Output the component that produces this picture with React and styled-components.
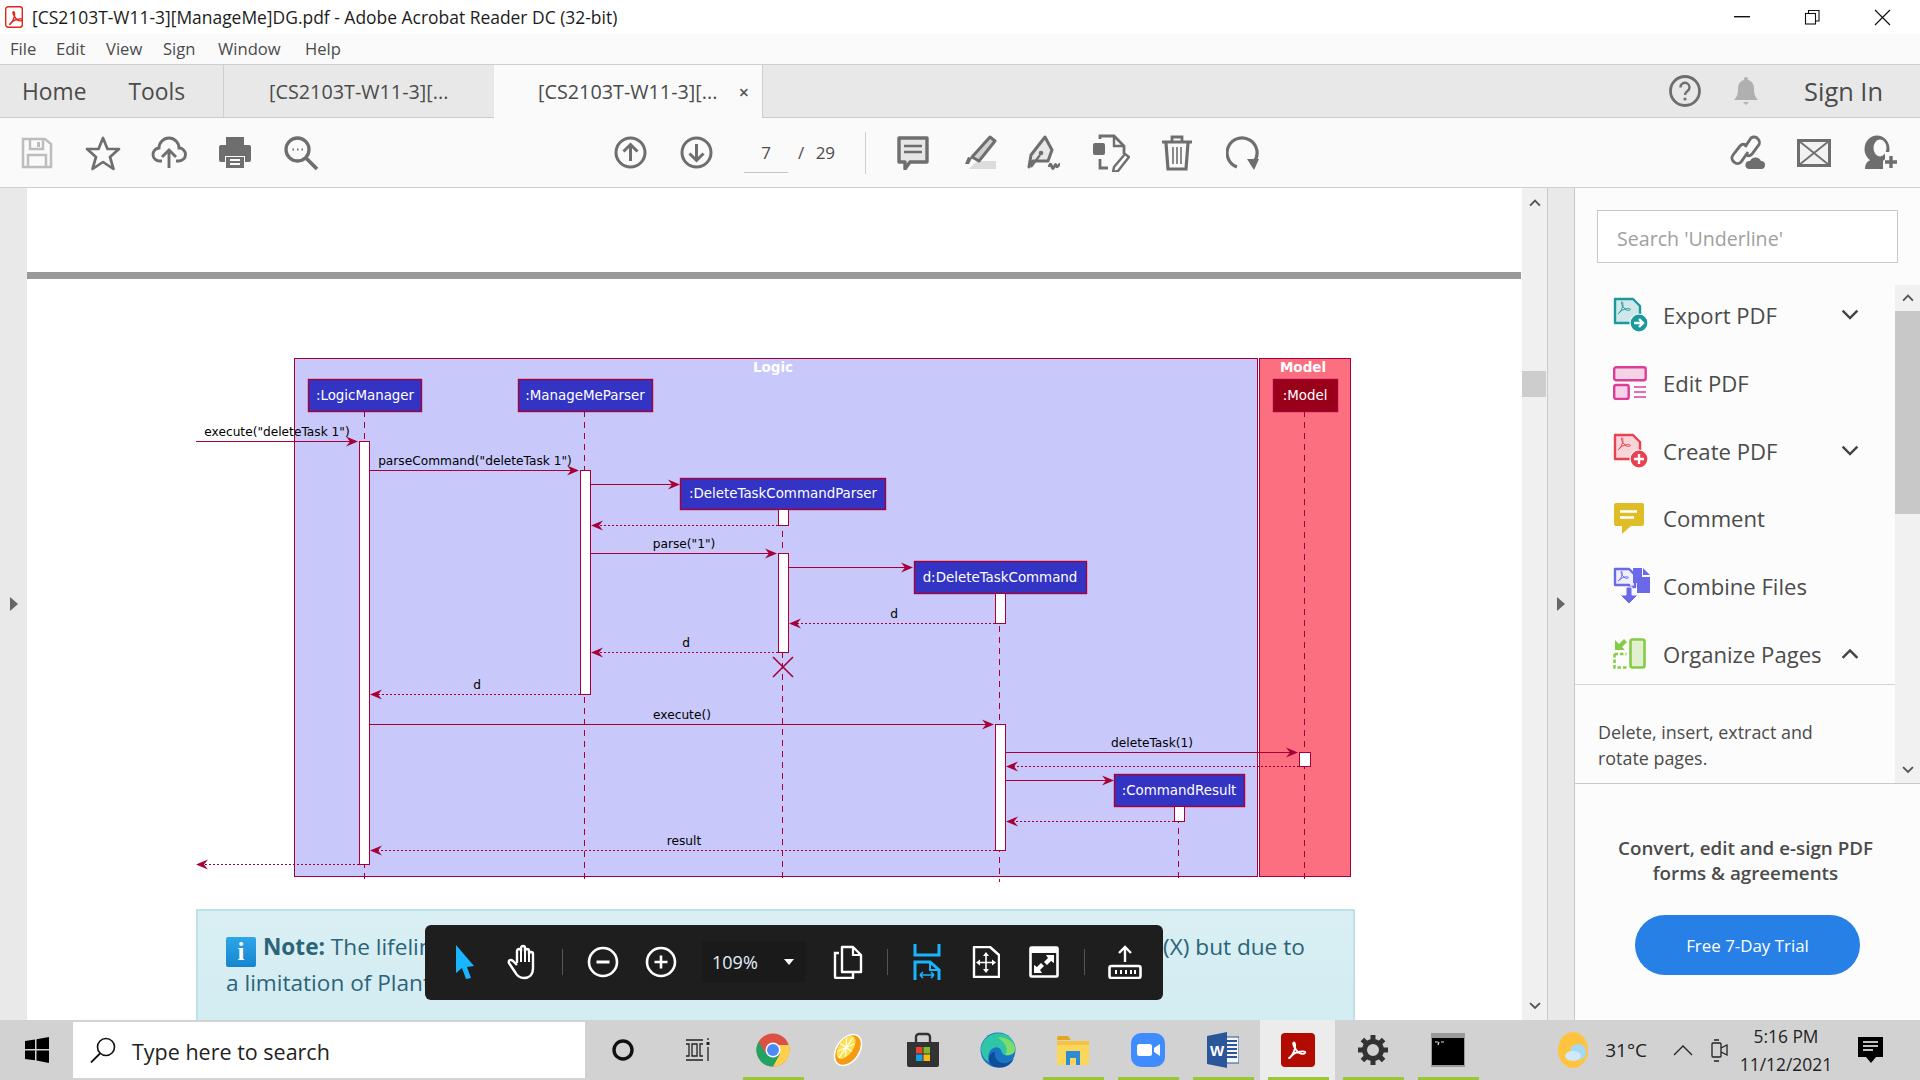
import React from "react";
import styled, { createGlobalStyle } from "styled-components";

const UI_FONT = `"Open Sans", "Noto Sans", sans-serif`;
const PLANT = "#a80036";

const Global = createGlobalStyle`
  html, body { margin: 0; padding: 0; background: #fff; }
  body { font-family: ${UI_FONT}; color: #444; overflow: hidden; }
  * { box-sizing: border-box; }
`;

const Window = styled.div`
  width: 1920px;
  height: 1080px;
  display: flex;
  flex-direction: column;
  overflow: hidden;
`;

// title bar
const TitleBar = styled.div`
  height: 34px;
  flex: none;
  background: #fff;
  display: flex;
  align-items: center;
  padding-left: 5px;
`;
const TitleText = styled.div`
  margin-left: 9px;
  font-size: 17.45px;
  color: #1c1c1c;
  white-space: nowrap;
`;
const WinControls = styled.div`
  margin-left: auto;
  margin-right: 3px;
  display: flex;
`;
const WinBtn = styled.div`
  width: 70px;
  height: 34px;
  display: flex;
  align-items: center;
  justify-content: center;
`;

// menu
const MenuBar = styled.div`
  height: 31px;
  flex: none;
  background: #fafafa;
  border-bottom: 1px solid #cfcfcf;
  display: flex;
  align-items: center;
  padding-left: 10px;
  padding-bottom: 1px;
`;
const MenuItem = styled.span`
  width: ${(p) => p.$w}px;
  font-size: 16.6px;
  color: #4b4b4b;
`;

// tabs
const TabBar = styled.div`
  height: 53px;
  flex: none;
  background: #e8e8e8;
  border-bottom: 1px solid #cacaca;
  display: flex;
  align-items: stretch;
`;
const NavGroup = styled.div`
  width: 224px;
  display: flex;
  align-items: center;
  padding-left: 22px;
  gap: 42px;
  border-right: 1px solid #cfcfcf;
`;
const NavLink = styled.span`
  font-size: 22.8px;
  color: #4b4b4b;
`;
const Tab = styled.div`
  width: ${(p) => (p.$active ? 269 : 270)}px;
  padding-left: ${(p) => (p.$active ? 44 : 45)}px;
  display: flex;
  align-items: center;
  font-size: 19.8px;
  color: #4b4b4b;
  background: ${(p) => (p.$active ? "#fafafa" : "transparent")};
  border-right: 1px solid ${(p) => (p.$active ? "#cfcfcf" : "transparent")};
  margin-bottom: ${(p) => (p.$active ? "-1px" : "0")};
  position: relative;
`;
const TabClose = styled.span`
  margin-left: auto;
  margin-right: 13px;
  font-size: 18px;
  font-weight: 600;
  color: #555;
`;
const TabRight = styled.div`
  margin-left: auto;
  display: flex;
  align-items: center;
  padding-right: 37px;
`;
const BellSlot = styled.div`
  margin-left: 32px;
  display: flex;
`;
const SignIn = styled.span`
  margin-left: 45px;
  font-size: 25.4px;
  font-weight: 500;
  color: #4b4b4b;
`;

// toolbar
const ToolBar = styled.div`
  height: 70px;
  flex: none;
  background: #fafafa;
  border-bottom: 1px solid #cfcfcf;
  display: flex;
  align-items: center;
  padding: 0 7px 0 4px;
`;
const Slot = styled.div`
  width: 66px;
  display: flex;
  align-items: center;
  justify-content: center;
`;
const ToolGroup = styled.div`
  display: flex;
  align-items: center;
  margin-left: ${(p) => (p.$push ? "auto" : `${p.$left || 0}px`)};
`;
const PageBox = styled.div`
  margin-left: 15px;
  width: 44px;
  height: 35px;
  border-bottom: 1px solid #c4c4c4;
  margin-top: 5px;
  text-align: center;
  font-size: 17px;
  line-height: 30px;
  color: #4b4b4b;
`;
const PageTotal = styled.span`
  margin-left: 10px;
  width: 55px;
  font-size: 17px;
  color: #4b4b4b;
  word-spacing: 7px;
`;
const ToolSep = styled.div`
  width: 1px;
  height: 42px;
  background: #cfcfcf;
  margin-left: 12px;
`;

// main area
const Main = styled.div`
  flex: 1;
  min-height: 0;
  display: flex;
`;
const Gutter = styled.div`
  width: ${(p) => p.$w}px;
  flex: none;
  background: #e9e9e9;
  display: flex;
  align-items: center;
  justify-content: center;
`;
const GutterArrow = styled.div`
  width: 0;
  height: 0;
  border-top: 7px solid transparent;
  border-bottom: 7px solid transparent;
  border-left: 8px solid #666;
`;
const DocPane = styled.div`
  width: 1495px;
  flex: none;
  background: #fff;
  position: relative;
  overflow: hidden;
  padding-top: 84px;
`;
const Rule = styled.div`
  height: 7px;
  margin-right: 1px;
  background: #999;
`;
const Diagram = styled.svg`
  display: block;
  margin: 71px 0 0 163px;
`;
const Note = styled.div`
  margin: 24px 0 0 169px;
  width: 1159px;
  height: 180px;
  padding: 18px 28px;
  background: linear-gradient(#d9eff4, #d0ebf0);
  border: 2px solid #bce2e8;
  font-size: 22.6px;
  color: #2b6478;
`;
const NoteIcon = styled.span`
  display: inline-flex;
  align-items: center;
  justify-content: center;
  width: 30px;
  height: 30px;
  margin-right: 7px;
  vertical-align: -5px;
  background: linear-gradient(#2fa5ea, #1486cf);
  border-radius: 2px;
  color: #fff;
  font: 700 25px "Liberation Serif", serif;
`;
const NoteLine = styled.div`
  height: 36px;
  line-height: 36px;
  white-space: nowrap;
`;
const Covered = styled.span`
  word-spacing: 2.5px;
`;
const FloatBar = styled.div`
  position: absolute;
  left: 398px;
  bottom: 20px;
  width: 738px;
  height: 75px;
  background: #1e1e1e;
  border-radius: 6px;
  display: flex;
  align-items: center;
  padding: 0 0 2px 11px;
`;
const FloatBtn = styled.div`
  width: ${(p) => p.$w || 58}px;
  flex: none;
  margin-left: ${(p) => p.$left || 0}px;
  display: flex;
  align-items: center;
  justify-content: center;
`;
const FloatSep = styled.div`
  width: 1px;
  height: 26px;
  background: #555;
  flex: none;
  margin: 0 ${(p) => p.$gap || 0}px;
`;
const ZoomBox = styled.div`
  width: 104px;
  height: 41px;
  flex: none;
  margin-left: 11px;
  background: #1a1a1a;
  display: flex;
  align-items: center;
  padding-left: 10px;
  color: #e4eef8;
  font-size: 18px;
`;
const ZoomCaret = styled.span`
  margin-left: 26px;
  width: 0;
  height: 0;
  border-left: 5px solid transparent;
  border-right: 5px solid transparent;
  border-top: 6px solid #fff;
`;

// page scrollbar
const PageScroll = styled.div`
  width: 26px;
  flex: none;
  background: #f0f0f0;
  border-right: 1px solid #c8c8c8;
  display: flex;
  flex-direction: column;
  align-items: center;
  padding: 11px 0 3px;
`;
const PageThumb = styled.div`
  align-self: flex-start;
  width: 24px;
  height: 26px;
  margin-top: 164px;
  background: #cdcdcd;
`;
const PageScrollEnd = styled.div`
  margin-top: auto;
  padding-bottom: 2px;
`;

// right panel
const Panel = styled.div`
  width: 346px;
  flex: none;
  background: #fcfcfc;
  border-left: 1px solid #c8c8c8;
  display: flex;
  flex-direction: column;
`;
const SearchBox = styled.div`
  margin: 22px 0 22px 22px;
  width: 301px;
  height: 53px;
  background: #fff;
  border: 1px solid #c8c8c8;
  padding: 3px 0 0 19px;
  display: flex;
  align-items: center;
  font-size: 19.6px;
  color: #a0a0a0;
`;
const ToolsArea = styled.div`
  height: 499px;
  flex: none;
  display: flex;
  border-bottom: 1px solid #c8c8c8;
`;
const ToolsList = styled.div`
  width: 320px;
  flex: none;
`;
const Rows = styled.div`
  display: flex;
  flex-direction: column;
  gap: 27.8px;
  padding: 10px 0 10px;
  border-bottom: 1px solid #d4d4d4;
`;
const Row = styled.div`
  height: 40px;
  display: flex;
  align-items: center;
  padding-left: 38px;
`;
const RowWrap = styled.div`
  position: relative;
  display: flex;
  align-items: center;
`;
const RowIcon = styled.div`
  width: 50px;
  flex: none;
  display: flex;
`;
const RowLabel = styled.span`
  font-size: 22.1px;
  color: #4b4b4b;
  white-space: nowrap;
`;
const RowChevron = styled.div`
  position: absolute;
  left: 228px;
  display: flex;
`;
const Description = styled.div`
  padding: 34px 0 0 23px;
  font-size: 17.9px;
  line-height: 26px;
  color: #4b4b4b;
`;
const ToolsScroll = styled.div`
  width: 25px;
  flex: none;
  background: #f1f1f1;
  display: flex;
  flex-direction: column;
  align-items: center;
`;
const ScrollBtn = styled.div`
  height: 26px;
  width: 100%;
  flex: none;
  display: flex;
  align-items: center;
  justify-content: center;
  margin-top: ${(p) => (p.$end ? "auto" : "0")};
`;
const ScrollThumb = styled.div`
  width: 100%;
  height: 203px;
  background: #c8c8c8;
`;
const Trial = styled.div`
  flex: 1;
  display: flex;
  flex-direction: column;
  align-items: center;
  padding-top: 52px;
`;
const TrialText = styled.div`
  font-size: 18.8px;
  font-weight: 600;
  line-height: 25px;
  text-align: center;
  color: #4b4b4b;
  margin-left: -4px;
`;
const TrialButton = styled.div`
  margin-top: 29px;
  width: 225px;
  height: 60px;
  border-radius: 30px;
  background: #2680e6;
  color: #fff;
  font-size: 16.9px;
  display: flex;
  align-items: center;
  justify-content: center;
`;

// taskbar
const Taskbar = styled.div`
  height: 60px;
  flex: none;
  background: #d2d2d2;
  display: flex;
  align-items: stretch;
`;
const StartBtn = styled.div`
  width: 73px;
  flex: none;
  display: flex;
  align-items: center;
  justify-content: center;
`;
const TaskSearch = styled.div`
  width: 512px;
  flex: none;
  margin: 2px 0;
  background: #fff;
  display: flex;
  align-items: center;
  padding-left: 17px;
  font-size: 21.5px;
  color: #222;
`;
const TaskSearchText = styled.span`
  margin: 2px 0 0 16px;
`;
const TaskCell = styled.div`
  width: 75px;
  flex: none;
  position: relative;
  display: flex;
  align-items: center;
  justify-content: center;
  background: ${(p) => (p.$active ? "#ececec" : "transparent")};
  ${(p) =>
    p.$on &&
    `&::after {
      content: "";
      position: absolute;
      left: 8px;
      right: 6px;
      bottom: 0;
      height: 3px;
      background: #9bc734;
    }`}
`;
const Tray = styled.div`
  margin-left: auto;
  display: flex;
  align-items: center;
  padding-right: 37px;
`;
const Temp = styled.span`
  margin-left: 17px;
  font-size: 19px;
  color: #222;
`;
const TrayIcon = styled.div`
  margin-left: ${(p) => p.$left}px;
  display: flex;
`;
const Clock = styled.div`
  margin-left: 9px;
  width: 96px;
  text-align: center;
  font-size: 17.4px;
  line-height: 28px;
  color: #222;
`;

// sequence diagram
const DiagramText = styled.text`
  font-family: "DejaVu Sans", sans-serif;
  font-size: ${(p) => p.$size || 12.2}px;
  font-weight: ${(p) => p.$weight || 400};
  fill: ${(p) => p.$fill || "#000"};
  text-anchor: middle;
  dominant-baseline: central;
`;

const participants = [
  { x: 308, y: 379, w: 113, h: 32, cx: 365, label: ":LogicManager" },
  { x: 518, y: 379, w: 134, h: 32, cx: 585, label: ":ManageMeParser" },
  { x: 680, y: 478, w: 205, h: 31, cx: 783, label: ":DeleteTaskCommandParser" },
  { x: 914, y: 561, w: 172, h: 32, cx: 1000, label: "d:DeleteTaskCommand" },
  { x: 1114, y: 774, w: 130, h: 32, cx: 1179, label: ":CommandResult" },
  { x: 1273, y: 379, w: 64, h: 32, cx: 1305, label: ":Model", fill: "#99001a" },
];
const lifelines = [
  [364, 411, 879],
  [584, 411, 879],
  [782, 509, 879],
  [999, 593, 882],
  [1178, 806, 879],
  [1304, 411, 879],
];
const activations = [
  [359, 441, 10, 423],
  [580, 470, 10, 224],
  [778, 509, 10, 16],
  [778, 553, 10, 99],
  [995, 593, 10, 30],
  [995, 724, 10, 126],
  [1299, 752, 11, 14],
  [1174, 806, 10, 15],
];
// from x, to x, y, dashed, label, label centre x
const messages = [
  [196, 358, 441, false, `execute("deleteTask 1")`, 277],
  [369, 579, 470, false, `parseCommand("deleteTask 1")`, 475],
  [590, 680, 484, false],
  [778, 591, 525, true],
  [590, 777, 553, false, `parse("1")`, 684],
  [788, 913, 567, false],
  [995, 789, 623, true, "d", 894],
  [778, 591, 652, true, "d", 686],
  [580, 370, 694, true, "d", 477],
  [369, 994, 724, false, "execute()", 682],
  [1005, 1298, 752, false, "deleteTask(1)", 1152],
  [1299, 1006, 766, true],
  [1005, 1114, 780, false],
  [1174, 1006, 821, true],
  [995, 370, 850, true, "result", 684],
  [359, 196, 864, true],
];

const SequenceDiagram = () => (
  <Diagram width="1170" height="535" viewBox="190 350 1170 535">
    <rect x="294.5" y="358.5" width="963" height="518" fill="#c8c8fa" stroke={PLANT} />
    <rect x="1259.5" y="358.5" width="91" height="518" fill="#fc6f81" stroke={PLANT} />
    <DiagramText x="773" y="367" $size="13.5" $weight="700" $fill="#fff">Logic</DiagramText>
    <DiagramText x="1303" y="367" $size="13.5" $weight="700" $fill="#fff">Model</DiagramText>
    {lifelines.map(([x, a, b]) => (
      <line key={x} x1={x + 0.5} x2={x + 0.5} y1={a} y2={b} stroke={PLANT} strokeDasharray="6 5" />
    ))}
    {participants.map((p) => (
      <g key={p.label}>
        <rect x={p.x + 0.5} y={p.y + 0.5} width={p.w} height={p.h} fill={p.fill || "#3333c4"} stroke={PLANT} strokeWidth="1.4" />
        <DiagramText x={p.cx} y={p.y + p.h / 2} $size="13.4" $fill="#fff">{p.label}</DiagramText>
      </g>
    ))}
    {activations.map(([x, y, w, h]) => (
      <rect key={`${x}-${y}`} x={x + 0.5} y={y + 0.5} width={w} height={h} fill="#fff" stroke={PLANT} />
    ))}
    {messages.map(([from, to, y, dashed, label, cx]) => {
      const d = to > from ? 1 : -1;
      return (
        <g key={`${from}-${y}`}>
          <line x1={from} x2={to - d * 3} y1={y + 0.5} y2={y + 0.5} stroke={PLANT} strokeWidth="1.1" strokeDasharray={dashed ? "2 2" : undefined} />
          <path d={`M${to} ${y + 0.5}L${to - d * 12} ${y - 4.5}L${to - d * 8} ${y + 0.5}L${to - d * 12} ${y + 5.5}Z`} fill={PLANT} />
          {label && <DiagramText x={cx} y={y - 9}>{label}</DiagramText>}
        </g>
      );
    })}
    <path d="M773 657L793 677M793 657L773 677" stroke={PLANT} strokeWidth="1.6" />
  </Diagram>
);

// icons
const Ico = ({ w = 32, h, vb = "0 0 32 32", children, ...rest }) => (
  <svg width={w} height={h || w} viewBox={vb} fill="none" {...rest}>
    {children}
  </svg>
);
const G = "#6e6e6e";

const AcrobatSwirl = ({ color, width = 1.6 }) => (
  <path
    d="M7 24c3-2 5-6 6-10 .5-3 0-6-1.300-5.500C10 9.500 13 15 16 18c2 2 6 2.500 7 1s-1-2-4-1.500c-4 .5-8 2-10 5-1 1.500-2 2-2 1.500z"
    stroke={color}
    strokeWidth={width}
    fill="none"
  />
);

const icons = {
  save: (
    <Ico>
      <path d="M2 2h22l6 5v23H2z" stroke="#bdbdbd" strokeWidth="2.500" />
      <path d="M9 3v9h13V3M7 29V18h18v11" stroke="#bdbdbd" strokeWidth="2.500" />
      <rect x="16" y="5" width="3" height="5" fill="#bdbdbd" />
    </Ico>
  ),
  star: (
    <Ico w={36} vb="0 0 36 36">
      <path d="M18 3l4.500 11h11.500l-9 8 3.500 12-10.500-7-10.500 7 3.500-12-9-8h11.500z" stroke={G} strokeWidth="2.700" strokeLinejoin="round" />
    </Ico>
  ),
  cloud: (
    <Ico w={36} vb="0 0 36 36">
      <path d="M11 26H9a6.500 6.500 0 0 1-1-13 10 10 0 0 1 20 0 6.500 6.500 0 0 1 0 13h-3" stroke={G} strokeWidth="2.900" />
      <path d="M18 33V15M11 22l7-7 7 7" stroke={G} strokeWidth="2.900" />
    </Ico>
  ),
  print: (
    <Ico w={36} vb="0 0 36 36">
      <path d="M9 2h18v9H9z" fill={G} />
      <path d="M4 10h28a2 2 0 0 1 2 2v13a2 2 0 0 1-2 2h-4v-6H8v6H4a2 2 0 0 1-2-2V12a2 2 0 0 1 2-2z" fill={G} />
      <path d="M9 22h18v11H9z" fill={G} />
      <path d="M13 25h10M13 29h10" stroke="#fafafa" strokeWidth="1.800" />
    </Ico>
  ),
  search: (
    <Ico w={36} vb="0 0 36 36">
      <circle cx="14.500" cy="14.500" r="11.500" stroke={G} strokeWidth="3.300" />
      <path d="M23 23l11 11" stroke={G} strokeWidth="3.800" />
      <path d="M9.500 14.500h1.500M14 14.500h1.500M18.500 14.500h1.500" stroke={G} strokeWidth="2" />
    </Ico>
  ),
  up: (
    <Ico w={33} vb="0 0 33 33">
      <circle cx="16.500" cy="16.500" r="14.500" stroke={G} strokeWidth="3" />
      <path d="M16.500 25V9M9.500 15.500l7-7 7 7" stroke={G} strokeWidth="3" />
    </Ico>
  ),
  down: (
    <Ico w={33} vb="0 0 33 33">
      <circle cx="16.500" cy="16.500" r="14.500" stroke={G} strokeWidth="3" />
      <path d="M16.500 8v16M9.500 17.500l7 7 7-7" stroke={G} strokeWidth="3" />
    </Ico>
  ),
  comment: (
    <Ico w={32} h={34} vb="0 0 32 34">
      <path d="M2 2h28v24H13l-5 7v-7H2z" fill="#e6e6e6" stroke={G} strokeWidth="3.400" strokeLinejoin="round" />
      <path d="M7 10h18M7 16h18" stroke={G} strokeWidth="2.400" />
    </Ico>
  ),
  highlight: (
    <Ico w={36} vb="0 0 36 36">
      <path d="M8 34h27v-8H16z" fill="#dcdcdc" />
      <path d="M29 2l5 4-16 20-7-4z" fill="#d0d0d0" stroke={G} strokeWidth="3" strokeLinejoin="round" />
      <path d="M11 23l-3 6h-4l3-7" fill={G} />
    </Ico>
  ),
  sign: (
    <Ico w={36} vb="0 0 36 36">
      <path d="M18 2l7 13-4 11H6l-4 6 2-12z" fill="#e8e8e8" stroke={G} strokeWidth="3" strokeLinejoin="round" />
      <path d="M4 32l9-12" stroke={G} strokeWidth="2.200" />
      <circle cx="14" cy="18" r="2.300" fill={G} />
      <path d="M22 32c1-4 2-4 3 0s2 0 3-2 1 2 2 2 2-3 3-3" stroke={G} strokeWidth="2.600" />
    </Ico>
  ),
  edit: (
    <Ico w={38} vb="0 0 38 38">
      <rect x="1" y="9" width="12" height="12" rx="2" fill={G} />
      <path d="M8 5V2h14l10 10v8" stroke={G} strokeWidth="2.800" />
      <path d="M22 2v10h10" stroke={G} strokeWidth="2.400" />
      <path d="M8 25v9h8" stroke={G} strokeWidth="2.800" />
      <path d="M33 20l4 3-11 14-5 1 1-5z" stroke={G} strokeWidth="2.400" strokeLinejoin="round" />
    </Ico>
  ),
  trash: (
    <Ico w={32} h={36} vb="0 0 32 36">
      <path d="M1 7h30" stroke={G} strokeWidth="3" />
      <path d="M11 6V2h10v4" stroke={G} strokeWidth="2.800" />
      <path d="M5 8l2 26h18l2-26" stroke={G} strokeWidth="3.200" />
      <path d="M12 12v17M16 12v17M20 12v17" stroke={G} strokeWidth="1.600" />
    </Ico>
  ),
  rotate: (
    <Ico w={34} vb="0 0 34 34">
      <path d="M11 31A15 15 0 1 1 28 26" stroke={G} strokeWidth="3.200" />
      <path d="M21 23h12l-5 11z" fill={G} />
    </Ico>
  ),
  link: (
    <Ico w={38} vb="0 0 38 38">
      <path d="M16 13l6-9a5 5 0 0 1 7 1 5 5 0 0 1 0 7l-6 8a5 5 0 0 1-6 1" stroke={G} strokeWidth="2.900" />
      <path d="M19 18l-7 10a5 5 0 0 1-7 0 5 5 0 0 1-1-7l7-9a5 5 0 0 1 6-1" stroke={G} strokeWidth="2.900" />
      <path d="M20 35a4 4 0 0 1 1-8 6 6 0 0 1 11 0 4 4 0 0 1 4 4 4 4 0 0 1-3 4z" fill={G} />
    </Ico>
  ),
  mail: (
    <Ico w={34} h={28} vb="0 0 34 28">
      <rect x="1.500" y="1.500" width="31" height="25" fill="#f2f2f2" stroke={G} strokeWidth="3" />
      <path d="M2 2l30 24M32 2L2 26" stroke={G} strokeWidth="1.800" />
    </Ico>
  ),
  user: (
    <Ico w={36} vb="0 0 36 36">
      <ellipse cx="15" cy="14" rx="12.500" ry="13.500" fill={G} />
      <ellipse cx="18" cy="13" rx="6.500" ry="8.500" fill="#fafafa" />
      <path d="M3 34c0-6 3-9 9-10l9 1v9z" fill={G} />
      <path d="M23 17h13v17H23z" fill="#fafafa" />
      <path d="M29 21v12M23 27h12" stroke={G} strokeWidth="3.400" />
    </Ico>
  ),
  help: (
    <Ico w={32} vb="0 0 32 32">
      <circle cx="16" cy="16" r="14.500" stroke={G} strokeWidth="2.800" />
      <path d="M11.500 12.500a4.500 4.500 0 1 1 7 3.500c-1.500 1-2.500 2-2.500 4" stroke={G} strokeWidth="2.400" />
      <circle cx="16" cy="24" r="1.600" fill={G} />
    </Ico>
  ),
  bell: (
    <Ico w={26} h={30} vb="0 0 26 30">
      <path d="M13 1c1.500 0 2 1 2 3 4 1 6 4 6 9 0 5 1 8 4 11H1c3-3 4-6 4-11 0-5 2-8 6-9 0-2 .5-3 2-3z" fill="#b0b0b0" />
      <path d="M10 26h6l-3 3z" fill="#b0b0b0" />
    </Ico>
  ),
};

const panelIcons = {
  export: (
    <Ico w={36} vb="0 0 36 36">
      <path d="M2 2h18l7 7v17H2z" fill="#cfe7e8" stroke="#1a9a9e" strokeWidth="2.400" strokeLinejoin="round" />
      <g transform="scale(.75) translate(0 -2)"><AcrobatSwirl color="#1a9a9e" width={1.3} /></g>
      <circle cx="26" cy="26" r="9" fill="#1a9a9e" stroke="#fcfcfc" strokeWidth="1.200" />
      <path d="M21 26h8M26 22l4 4-4 4" stroke="#fff" strokeWidth="2.400" />
    </Ico>
  ),
  edit: (
    <Ico w={34} vb="0 0 34 34">
      <rect x="1.200" y="1.200" width="31.500" height="13" rx="2" fill="#f4d3e6" stroke="#dd3d98" strokeWidth="2.400" />
      <rect x="1.200" y="19" width="14.500" height="14" rx="2" fill="#f4d3e6" stroke="#dd3d98" strokeWidth="2.400" />
      <path d="M21 21h12M21 26h12M21 31h12" stroke="#dd3d98" strokeWidth="1.700" />
    </Ico>
  ),
  create: (
    <Ico w={36} vb="0 0 36 36">
      <path d="M2 2h18l7 7v17H2z" fill="#f7d5d8" stroke="#e8424f" strokeWidth="2.400" strokeLinejoin="round" />
      <g transform="scale(.75) translate(0 -2)"><AcrobatSwirl color="#e8424f" width={1.3} /></g>
      <circle cx="26" cy="26" r="9" fill="#e8424f" stroke="#fcfcfc" strokeWidth="1.200" />
      <path d="M21 26h10M26 21v10" stroke="#fff" strokeWidth="2.400" />
    </Ico>
  ),
  comment: (
    <Ico w={32} vb="0 0 32 32">
      <path d="M3 1h26a2 2 0 0 1 2 2v19a2 2 0 0 1-2 2H18l-9 8v-8H3a2 2 0 0 1-2-2V3a2 2 0 0 1 2-2z" fill="#dfbd26" />
      <path d="M7 9.500h17M7 15.500h14" stroke="#fff" strokeWidth="2.600" />
    </Ico>
  ),
  combine: (
    <Ico w={38} vb="0 0 38 38">
      <path d="M2 2h14l6 6v12h-6v-2H2z" fill="#f0effd" stroke="#6a6ae8" strokeWidth="2.400" strokeLinejoin="round" />
      <g transform="translate(1 -1) scale(.62)"><AcrobatSwirl color="#6a6ae8" width={1.6} /></g>
      <path d="M20 1h9v9h8v16H24V16h-4z" fill="#6a6ae8" />
      <path d="M30 1l7 7h-7z" fill="#6a6ae8" />
      <path d="M13 20h6v8h6l-9 9-9-9h6z" fill="#6a6ae8" stroke="#fcfcfc" />
    </Ico>
  ),
  organize: (
    <Ico w={33} h={31} vb="0 0 33 31">
      <rect x="17.500" y="1.500" width="14" height="28" rx="2" fill="#e0f0d0" stroke="#84cc44" strokeWidth="2.600" />
      <path d="M1.500 16v13.500h12M1.500 16h12" stroke="#84cc44" strokeWidth="2.600" strokeDasharray="3.500 2" />
      <path d="M2 2v10h10L9 9l5-5-3-3-5 5-3-3z" fill="#84cc44" />
    </Ico>
  ),
};

const Chevron = ({ up, size = 22, color = "#444", width = 3 }) => (
  <svg width={size} height={size * 0.64} viewBox="0 0 22 14" fill="none">
    <path d={up ? "M2 12l9-9 9 9" : "M2 2l9 9 9-9"} stroke={color} strokeWidth={width} />
  </svg>
);

const floatIcons = {
  cursor: (
    <Ico w={24} h={36} vb="0 0 24 36">
      <path d="M3 1l18 21-7 1 4 11-5 1-4-11-6 5z" fill="#19b5fe" />
    </Ico>
  ),
  hand: (
    <Ico w={36} h={36} vb="0 0 36 36">
      <path
        d="M13 19V7a2 2 0 0 1 4 0V4a2 2 0 0 1 4 0v3a2 2 0 0 1 4 0v3a2 2 0 0 1 4 0v14c0 7-4 10-9 10-4 0-7-2-9-6l-6-9c-1-3 2-4 4-2l4 4"
        stroke="#fff"
        strokeWidth="2.400"
        strokeLinejoin="round"
      />
      <path d="M17 7v11M21 7v11M25 10v8" stroke="#fff" strokeWidth="2" />
    </Ico>
  ),
  minus: (
    <Ico w={32} vb="0 0 32 32">
      <circle cx="16" cy="16" r="14" stroke="#fff" strokeWidth="2.600" />
      <path d="M9.500 16h13" stroke="#fff" strokeWidth="3" />
    </Ico>
  ),
  plus: (
    <Ico w={32} vb="0 0 32 32">
      <circle cx="16" cy="16" r="14" stroke="#fff" strokeWidth="2.600" />
      <path d="M9.500 16h13M16 9.500v13" stroke="#fff" strokeWidth="2.600" />
    </Ico>
  ),
  pages: (
    <Ico w={30} h={34} vb="0 0 30 34">
      <path d="M6 8H2v24a1 1 0 0 0 1 1h17v-5" stroke="#fff" strokeWidth="2.400" />
      <path d="M9 2h11l8 8v17H9z" fill="#1e1e1e" stroke="#fff" strokeWidth="2.400" strokeLinejoin="round" />
      <path d="M20 2v8h8" stroke="#fff" strokeWidth="2.200" />
    </Ico>
  ),
  fitWidth: (
    <Ico w={28} h={36} vb="0 0 28 36">
      <path d="M2 0v11h24V0" stroke="#19b5fe" strokeWidth="3" />
      <path d="M2 36V18h15l9 8v10" stroke="#19b5fe" strokeWidth="3" />
      <path d="M17 18v8h9" stroke="#19b5fe" strokeWidth="2" />
      <path d="M7 31h14M7 31l3-3M7 31l3 3M21 31l-3-3M21 31l-3 3" stroke="#19b5fe" strokeWidth="1.600" />
    </Ico>
  ),
  fitPage: (
    <Ico w={28} h={32} vb="0 0 28 32">
      <path d="M2 1h16l9 8v22H2z" stroke="#fff" strokeWidth="2.400" strokeLinejoin="round" />
      <path d="M14 9v15M7 16.500h14" stroke="#fff" strokeWidth="1.600" />
      <path d="M14 6l-3 4h6zM14 27l-3-4h6zM4 16.500l4-3v6zM24 16.500l-4-3v6z" fill="#fff" />
    </Ico>
  ),
  full: (
    <Ico w={30} h={32} vb="0 0 30 32">
      <rect x="1.500" y="1.500" width="27" height="29" rx="1" stroke="#fff" strokeWidth="2.600" />
      <path d="M1 1h28v6H1z" fill="#fff" />
      <path d="M17 9h8v8l-3-2-4 4-3-3 4-4zM13 27H5v-8l3 2 4-4 3 3-4 4z" fill="#fff" />
    </Ico>
  ),
  read: (
    <Ico w={34} h={34} vb="0 0 34 34">
      <path d="M17 17V2M11 8l6-6 6 6" stroke="#fff" strokeWidth="2.400" />
      <rect x="1.500" y="21" width="31" height="12" rx="2" stroke="#fff" strokeWidth="2.600" />
      <path d="M8 25v4M13 25v4M18 25v4M23 25v4M27 25v4" stroke="#fff" strokeWidth="2" />
    </Ico>
  ),
};

const taskIcons = {
  cortana: (
    <Ico w={22} vb="0 0 22 22">
      <circle cx="11" cy="11" r="9" stroke="#111" strokeWidth="3.400" />
    </Ico>
  ),
  taskView: (
    <Ico w={26} h={26} vb="0 0 26 26">
      <path d="M1 3h17M1 23h17" stroke="#222" strokeWidth="1.300" />
      <path d="M1 7h3v12H1M18 7h-3v12h3M7 7h5v12H7z" stroke="#222" strokeWidth="1.300" />
      <path d="M23 1v2M23 10v14" stroke="#222" strokeWidth="1.300" />
      <rect x="21.500" y="5" width="3" height="3" fill="#222" />
    </Ico>
  ),
  chrome: (
    <Ico w={34} vb="0 0 34 34">
      <circle cx="17" cy="17" r="16.500" fill="#dd5144" />
      <path d="M2.700 8.700A16.500 16.500 0 0 0 17 33.500L24 21 10 21z" fill="#1fa463" />
      <path d="M33 12H17l7 9-7 12.500A16.500 16.500 0 0 0 33 12z" fill="#ffd04c" />
      <circle cx="17" cy="17" r="7.500" fill="#fff" />
      <circle cx="17" cy="17" r="6" fill="#4c8bf5" />
    </Ico>
  ),
  orange: (
    <Ico w={36} vb="0 0 36 36">
      <g transform="rotate(35 18 18)">
        <ellipse cx="18" cy="18" rx="12" ry="18" fill="#fff" />
        <ellipse cx="18" cy="18" rx="10.500" ry="16.500" fill="#f59a13" />
        <ellipse cx="15" cy="17" rx="7" ry="13" fill="#ffe14a" />
        <path d="M15 5v25M8 17h14M10 9l10 16M20 9L10 25" stroke="#fff" strokeWidth="1.100" />
      </g>
    </Ico>
  ),
  store: (
    <Ico w={36} vb="0 0 36 36">
      <path d="M11 10V5a3 3 0 0 1 3-3h8a3 3 0 0 1 3 3v5" stroke="#333" strokeWidth="2.400" />
      <path d="M2 10h32v23a2 2 0 0 1-2 2H4a2 2 0 0 1-2-2z" fill="#333" />
      <rect x="11" y="15" width="6.500" height="6.500" fill="#e8432e" />
      <rect x="18.500" y="15" width="6.500" height="6.500" fill="#7cbb2b" />
      <rect x="11" y="22.500" width="6.500" height="6.500" fill="#10a1e8" />
      <rect x="18.500" y="22.500" width="6.500" height="6.500" fill="#fbb812" />
    </Ico>
  ),
  edge: (
    <Ico w={36} vb="0 0 36 36">
      <circle cx="18" cy="18" r="17.500" fill="#1a74c4" />
      <path d="M1 16C3 5 14-1 24 2c7 2 11 8 11 15 0 5-5 7-10 6-4-1-3-6-6-7-3-2-8 0-10 5-1 3-1 6 0 9C4 28 1 22 1 16z" fill="#2fc6a8" />
      <path d="M18 5c9 0 17 5 17 12 0 5-5 7-10 6 3-3 2-9-2-13-2-2-4-4-5-5z" fill="#7fdc6a" />
      <path d="M15 20c-1 5 2 10 8 11 4 1 8-1 11-5-3 8-11 11-18 9-5-1-8-5-7-10 1-3 3-5 6-5z" fill="#0d4d9c" />
    </Ico>
  ),
  folder: (
    <Ico w={34} vb="0 0 34 34">
      <path d="M1 5a2 2 0 0 1 2-2h9l3 4H1z" fill="#e5a521" />
      <path d="M1 8h32v24H1z" fill="#fbd65a" />
      <path d="M1 8h32v4H1z" fill="#f5c33f" />
      <path d="M10 18h14v14h-4v-7h-6v7h-4z" fill="#2e8bd8" />
    </Ico>
  ),
  zoom: (
    <Ico w={34} vb="0 0 34 34">
      <rect x="0" y="0" width="34" height="34" rx="10" fill="#3f8cff" />
      <rect x="6" y="11" width="15" height="12" rx="2.500" fill="#fff" />
      <path d="M23 15l6-4v12l-6-4z" fill="#fff" />
    </Ico>
  ),
  word: (
    <Ico w={32} h={36} vb="0 0 32 36">
      <rect x="14" y="5" width="18" height="26" fill="#f4f6fa" stroke="#2b579a" />
      <path d="M20 9h10M20 13h10M20 17h10M20 21h10M20 25h10" stroke="#2b579a" strokeWidth="2" />
      <path d="M0 4l20-4v36L0 32z" fill="#2b579a" />
      <text x="10" y="24" fill="#fff" fontSize="15" fontWeight="700" textAnchor="middle" fontFamily="Liberation Sans, sans-serif">W</text>
    </Ico>
  ),
  acrobat: (
    <Ico w={34} vb="0 0 34 34">
      <rect x="0" y="0" width="34" height="34" rx="4" fill="#b30b00" />
      <g transform="translate(1 1)"><AcrobatSwirl color="#fff" width={1.8} /></g>
    </Ico>
  ),
  gear: (
    <Ico w={30} vb="0 0 30 30">
      <circle cx="15" cy="15" r="8.500" stroke="#333" strokeWidth="5" />
      <path d="M15 0v6M15 24v6M0 15h6M24 15h6M4.400 4.400l4.300 4.300M21.300 21.300l4.300 4.300M4.400 25.600l4.300-4.300M21.300 8.700l4.300-4.300" stroke="#333" strokeWidth="5" />
    </Ico>
  ),
  cmd: (
    <Ico w={34} h={34} vb="0 0 34 34">
      <rect x="0" y="0" width="34" height="34" fill="#9a9a9a" />
      <rect x="1" y="5" width="32" height="27" fill="#000" />
      <path d="M4 9h3M8 9l-1 3M10 9h3" stroke="#ddd" strokeWidth="1.200" />
    </Ico>
  ),
};

const Squares = () => (
  <Ico w={26} vb="0 0 26 26">
    <path d="M1 4l10-1.500V12H1zM12.500 2.300L25 0v12H12.500zM1 13.500h10v9.800L1 22zM12.500 13.500H25V26l-12.500-2.400z" fill="#000" />
  </Ico>
);

const taskCells = [
  ["cortana"],
  ["taskView"],
  ["chrome", true],
  ["orange"],
  ["store"],
  ["edge"],
  ["folder", true],
  ["zoom", true],
  ["word", true],
  ["acrobat", true, true],
  ["gear", true],
  ["cmd", true],
];

const rows = [
  ["export", "Export PDF", "down"],
  ["edit", "Edit PDF"],
  ["create", "Create PDF", "down"],
  ["comment", "Comment"],
  ["combine", "Combine Files"],
  ["organize", "Organize Pages", "up"],
];

const App = () => {
  return (
    <Window>
      <Global />
      <TitleBar>
        <Ico w={18} h={22} vb="0 0 18 22">
          <rect x=".7" y=".7" width="16.600" height="20.600" rx="2.500" fill="#fff" stroke="#e1251b" strokeWidth="1.400" />
          <g transform="translate(-1 -1) scale(.8)"><AcrobatSwirl color="#e1251b" width={1.700} /></g>
        </Ico>
        <TitleText>[CS2103T-W11-3][ManageMe]DG.pdf - Adobe Acrobat Reader DC (32-bit)</TitleText>
        <WinControls>
          <WinBtn>
            <svg width="16" height="2"><rect width="16" height="1.400" fill="#111" /></svg>
          </WinBtn>
          <WinBtn>
            <svg width="16" height="16" fill="none" stroke="#111" strokeWidth="1.100">
              <rect x="1.500" y="4.500" width="10" height="10.500" />
              <path d="M4.500 4.500V1.500H15V12h-3.500" />
            </svg>
          </WinBtn>
          <WinBtn>
            <svg width="17" height="17" stroke="#111" strokeWidth="1.200">
              <path d="M1 1l15 15M16 1L1 16" />
            </svg>
          </WinBtn>
        </WinControls>
      </TitleBar>

      <MenuBar>
        <MenuItem $w={46}>File</MenuItem>
        <MenuItem $w={50}>Edit</MenuItem>
        <MenuItem $w={57}>View</MenuItem>
        <MenuItem $w={55}>Sign</MenuItem>
        <MenuItem $w={87}>Window</MenuItem>
        <MenuItem $w={50}>Help</MenuItem>
      </MenuBar>

      <TabBar>
        <NavGroup>
          <NavLink>Home</NavLink>
          <NavLink>Tools</NavLink>
        </NavGroup>
        <Tab>[CS2103T-W11-3][...</Tab>
        <Tab $active>
          [CS2103T-W11-3][...
          <TabClose>×</TabClose>
        </Tab>
        <TabRight>
          {icons.help}
          <BellSlot>{icons.bell}</BellSlot>
          <SignIn>Sign In</SignIn>
        </TabRight>
      </TabBar>

      <ToolBar>
        <ToolGroup>
          {["save", "star", "cloud", "print", "search"].map((k) => (
            <Slot key={k}>{icons[k]}</Slot>
          ))}
        </ToolGroup>
        <ToolGroup $left={263}>
          <Slot>{icons.up}</Slot>
          <Slot>{icons.down}</Slot>
        </ToolGroup>
        <PageBox>7</PageBox>
        <PageTotal>/ 29</PageTotal>
        <ToolSep />
        <ToolGroup $left={14}>
          {["comment", "highlight", "sign", "edit", "trash", "rotate"].map((k) => (
            <Slot key={k}>{icons[k]}</Slot>
          ))}
        </ToolGroup>
        <ToolGroup $push>
          {["link", "mail", "user"].map((k) => (
            <Slot key={k}>{icons[k]}</Slot>
          ))}
        </ToolGroup>
      </ToolBar>

      <Main>
        <Gutter $w={27}>
          <GutterArrow />
        </Gutter>
        <DocPane>
          <Rule />
          <SequenceDiagram />
          <Note>
            <NoteLine>
              <NoteIcon>i</NoteIcon>
              <b>Note:</b> The lifeline <Covered>for DeleteTaskCommandParser should end at the destroy marker</Covered> (X) but due to
            </NoteLine>
            <NoteLine>a limitation of PlantUML, the lifeline reaches the end of diagram.</NoteLine>
          </Note>
          <FloatBar>
            <FloatBtn $w={58}>{floatIcons.cursor}</FloatBtn>
            <FloatBtn $w={56}>{floatIcons.hand}</FloatBtn>
            <FloatSep $gap={12} />
            <FloatBtn $w={56}>{floatIcons.minus}</FloatBtn>
            <FloatBtn $w={60}>{floatIcons.plus}</FloatBtn>
            <ZoomBox>
              109%
              <ZoomCaret />
            </ZoomBox>
            <FloatBtn $w={60} $left={12}>{floatIcons.pages}</FloatBtn>
            <FloatSep $gap={9} />
            <FloatBtn $w={60}>{floatIcons.fitWidth}</FloatBtn>
            <FloatBtn>{floatIcons.fitPage}</FloatBtn>
            <FloatBtn>{floatIcons.full}</FloatBtn>
            <FloatSep $gap={11} />
            <FloatBtn $w={58}>{floatIcons.read}</FloatBtn>
          </FloatBar>
        </DocPane>
        <PageScroll>
          <Chevron up size={12} color="#555" width={3.500} />
          <PageThumb />
          <PageScrollEnd>
            <Chevron size={12} color="#555" width={3.500} />
          </PageScrollEnd>
        </PageScroll>
        <Gutter $w={26}>
          <GutterArrow />
        </Gutter>
        <Panel>
          <SearchBox>Search 'Underline'</SearchBox>
          <ToolsArea>
            <ToolsList>
              <Rows>
                {rows.map(([key, label, chev]) => (
                  <Row key={key}>
                    <RowWrap>
                      <RowIcon>{panelIcons[key]}</RowIcon>
                      <RowLabel>{label}</RowLabel>
                      {chev && (
                        <RowChevron>
                          <Chevron up={chev === "up"} size={18} />
                        </RowChevron>
                      )}
                    </RowWrap>
                  </Row>
                ))}
              </Rows>
              <Description>
                Delete, insert, extract and
                <br />
                rotate pages.
              </Description>
            </ToolsList>
            <ToolsScroll>
              <ScrollBtn>
                <Chevron up size={12} color="#555" width={3.500} />
              </ScrollBtn>
              <ScrollThumb />
              <ScrollBtn $end>
                <Chevron size={12} color="#555" width={3.500} />
              </ScrollBtn>
            </ToolsScroll>
          </ToolsArea>
          <Trial>
            <TrialText>
              Convert, edit and e-sign PDF
              <br />
              forms &amp; agreements
            </TrialText>
            <TrialButton>Free 7-Day Trial</TrialButton>
          </Trial>
        </Panel>
      </Main>

      <Taskbar>
        <StartBtn>
          <Squares />
        </StartBtn>
        <TaskSearch>
          <Ico w={26} vb="0 0 26 26">
            <circle cx="16" cy="10" r="8.500" stroke="#111" strokeWidth="1.600" />
            <path d="M10 16.500L1 25.500" stroke="#111" strokeWidth="1.800" />
          </Ico>
          <TaskSearchText>Type here to search</TaskSearchText>
        </TaskSearch>
        {taskCells.map(([key, on, active]) => (
          <TaskCell key={key} $on={on} $active={active}>
            {taskIcons[key]}
          </TaskCell>
        ))}
        <Tray>
          <TrayIcon $left={0}>
            <Ico w={30} h={36} vb="0 0 30 36">
              <ellipse cx="15" cy="18" rx="15" ry="18" fill="#ffc43d" />
              <ellipse cx="20" cy="20" rx="8" ry="8" fill="#a5d8f7" />
              <ellipse cx="15" cy="24" rx="8" ry="5" fill="#cfe9fb" />
            </Ico>
          </TrayIcon>
          <Temp>31°C</Temp>
          <TrayIcon $left={26}>
            <svg width="20" height="12" fill="none" stroke="#222" strokeWidth="1.300">
              <path d="M1 11l9-9 9 9" />
            </svg>
          </TrayIcon>
          <TrayIcon $left={18}>
            <svg width="18" height="26" fill="none" stroke="#222" strokeWidth="1.300">
              <rect x="1" y="6" width="9" height="14" rx="1" />
              <path d="M10 11l6-3v10l-6-3M3 3h5M3 24h5" />
            </svg>
          </TrayIcon>
          <Clock>
            5:16 PM
            <br />
            11/12/2021
          </Clock>
          <TrayIcon $left={24}>
            <svg width="25" height="26" fill="#000">
              <path d="M0 0h25v20h-7l-5 6-5-6H0z" />
              <path d="M5 5h15M5 9h15M5 13h10" stroke="#fff" strokeWidth="1.300" />
            </svg>
          </TrayIcon>
        </Tray>
      </Taskbar>
    </Window>
  );
};

export default App;
